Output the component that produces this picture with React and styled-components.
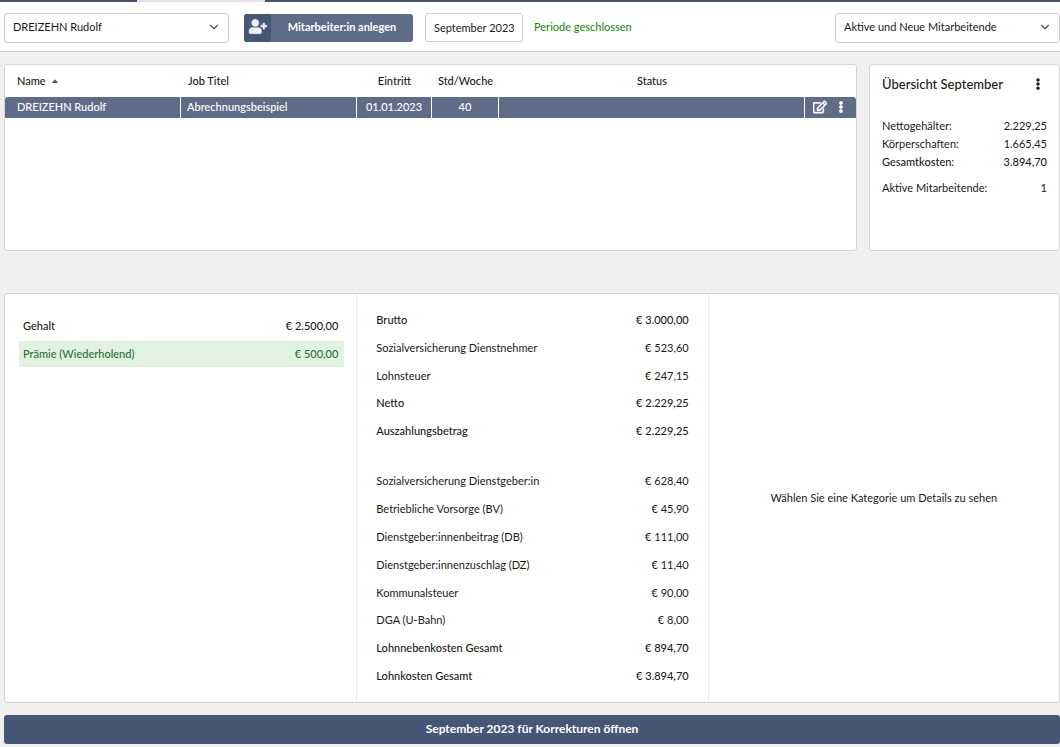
import React, { useState } from 'react'
import styled, { createGlobalStyle } from 'styled-components'
import { FaUserPlus, FaRegEdit, FaEllipsisV, FaCaretUp } from 'react-icons/fa'
import { LuChevronDown } from 'react-icons/lu'

const GlobalStyle = createGlobalStyle`
    * {
        box-sizing: border-box;
    }
    body {
        margin: 0;
        background: #f1f0ef;
        color: #1a1a1a;
        font-family: Lato, "Open Sans", sans-serif;
        font-size: 11px;
        line-height: 18px;
    }
    button, input, select {
        font: inherit;
        color: inherit;
    }
    h2, ul, p {
        margin: 0;
        padding: 0;
    }
`

const TabStrip = styled.nav`
    display: flex;
    height: 2px;
    background: #46536f;
`
const ActiveTab = styled.span`
    width: 128px;
    margin-left: 137px;
    background: #e4e4e8;
`
const Toolbar = styled.header`
    display: flex;
    align-items: center;
    height: 50px;
    padding: 2px 0 0 4px;
    background: #fff;
    border-bottom: 1px solid #cfcfcf;
`
const SelectBox = styled.div`
    position: relative;
    width: 225px;
    margin-left: ${props => props.$right ? 'auto' : '0'};
    svg {
        position: absolute;
        right: 8px;
        top: 7px;
        width: 14px;
        height: 14px;
        color: #46536f;
        pointer-events: none;
    }
`
const Select = styled.select`
    appearance: none;
    display: block;
    width: 100%;
    height: 30px;
    padding: 0 28px 2px 8px;
    background: #fff;
    border: 1px solid #cfcfcf;
    border-radius: 3px;
`
const AddButton = styled.button`
    display: flex;
    align-items: center;
    height: 28px;
    margin: 0 12px 0 15px;
    padding: 0;
    overflow: hidden;
    background: #5f6c88;
    border: none;
    border-radius: 3px;
    color: #fff;
    font-weight: 700;
`
const AddIcon = styled.span`
    display: flex;
    align-items: center;
    justify-content: center;
    width: 27px;
    height: 28px;
    padding-bottom: 2px;
    background: #465776;
    color: #eef1f7;
    svg {
        width: 18px;
        height: 15px;
        stroke: currentColor;
        stroke-width: 16px;
        overflow: visible;
    }
`
const AddLabel = styled.span`
    width: 142px;
    padding-bottom: 2px;
    text-align: center;
`
const PeriodInput = styled.input`
    width: 98px;
    height: 29px;
    padding: 0 8px;
    background: #fff;
    border: 1px solid #cfcfcf;
    border-radius: 3px;
`
const PeriodState = styled.span`
    margin-left: 11px;
    padding-bottom: 2px;
    color: #12850f;
`

const Page = styled.main`
    display: flex;
    flex-direction: column;
    padding: 12px 0 3px 4px;
`
const TopRow = styled.div`
    display: grid;
    grid-template-columns: 1fr 191px;
    gap: 12px;
    min-height: 187px;
    margin-bottom: 42px;
`
const Card = styled.section`
    background: #fff;
    border: 1px solid #d4d4d4;
    border-radius: 3px;
`

const StaffTable = styled.table`
    width: 100%;
    table-layout: fixed;
    border-collapse: separate;
    border-spacing: 0;
`
const HeadCell = styled.th`
    width: ${props => props.$width};
    height: 32px;
    padding: 0;
    padding-left: ${props => props.$left};
    font-weight: 500;
    text-align: ${props => props.$center ? 'center' : 'left'};
    svg {
        width: 10px;
        height: 10px;
        margin-left: 2px;
        vertical-align: -1px;
        color: #555;
    }
`
const Cell = styled.td`
    height: 21px;
    padding: 0 0 1px;
    padding-left: ${props => props.$left};
    background: #5f6c88;
    border-right: 1px solid #fff;
    color: #fff;
    font-weight: 500;
    text-align: ${props => props.$center ? 'center' : 'left'};
    &:first-child {
        border-top-left-radius: 3px;
    }
    &:last-child {
        border-right: none;
        border-top-right-radius: 3px;
    }
`
const RowActions = styled.div`
    display: flex;
    align-items: center;
    gap: 8px;
    padding-left: 8px;
    svg {
        stroke: currentColor;
        stroke-width: 20px;
    }
`
const IconButton = styled.button`
    display: flex;
    padding: 0;
    background: none;
    border: none;
    svg {
        width: ${props => props.$size};
        height: ${props => props.$size};
    }
`

const Overview = styled(Card)`
    padding: 9px 12px;
`
const OverviewHead = styled.div`
    display: flex;
    align-items: center;
    justify-content: space-between;
    margin-bottom: 23px;
    padding-right: 3px;
`
const OverviewTitle = styled.h2`
    font-size: 13px;
    font-weight: 500;
    line-height: 20px;
`
const OverviewLine = styled.p`
    display: flex;
    justify-content: space-between;
    margin-top: ${props => props.$gap ? '8px' : '0'};
    font-weight: ${props => props.$strong ? 500 : 400};
`

const Details = styled(Card)`
    display: grid;
    grid-template-columns: repeat(3, 1fr);
    min-height: 410px;
    margin-bottom: 12px;
`
const Column = styled.div`
    display: flex;
    flex-direction: column;
    gap: 22px;
    padding: ${props => props.$padding};
    & + & {
        border-left: 1px solid #ececec;
    }
`
const Amounts = styled.ul`
    display: grid;
    grid-auto-rows: 1fr;
    flex: ${props => props.$rows};
    list-style: none;
`
const Amount = styled.li`
    display: flex;
    align-items: center;
    justify-content: space-between;
    font-weight: ${props => props.$strong ? 500 : 400};
`
const Wages = styled.ul`
    display: grid;
    gap: 2px;
    list-style: none;
`
const Wage = styled.li`
    display: flex;
    align-items: center;
    justify-content: space-between;
    height: 26px;
    padding: 0 6px 0 4px;
    background: ${props => props.$active ? '#e0f2e0' : 'transparent'};
    color: ${props => props.$active ? '#2f6f35' : 'inherit'};
    font-weight: 500;
`
const Hint = styled.p`
    margin: auto;
`
const ReopenButton = styled.button`
    height: 29px;
    padding: 0 0 1px;
    background: #465776;
    border: none;
    border-radius: 3px;
    color: #fff;
    font-size: 12px;
    font-weight: 700;
`

const wages = [
    { label: 'Gehalt', value: '2.500,00' },
    { label: 'Prämie (Wiederholend)', value: '500,00', active: true },
]

const netto = [
    { label: 'Brutto', value: '3.000,00', strong: true },
    { label: 'Sozialversicherung Dienstnehmer', value: '523,60' },
    { label: 'Lohnsteuer', value: '247,15' },
    { label: 'Netto', value: '2.229,25', strong: true },
    { label: 'Auszahlungsbetrag', value: '2.229,25', strong: true },
]

const costs = [
    { label: 'Sozialversicherung Dienstgeber:in', value: '628,40' },
    { label: 'Betriebliche Vorsorge (BV)', value: '45,90' },
    { label: 'Dienstgeber:innenbeitrag (DB)', value: '111,00' },
    { label: 'Dienstgeber:innenzuschlag (DZ)', value: '11,40' },
    { label: 'Kommunalsteuer', value: '90,00' },
    { label: 'DGA (U-Bahn)', value: '8,00' },
    { label: 'Lohnnebenkosten Gesamt', value: '894,70', strong: true },
    { label: 'Lohnkosten Gesamt', value: '3.894,70', strong: true },
]

function AmountList ({ items }) {
    return (
        <Amounts $rows={items.length}>
            {items.map(item => (
                <Amount key={item.label} $strong={item.strong}>
                    <span>{item.label}</span>
                    <span>€ {item.value}</span>
                </Amount>
            ))}
        </Amounts>
    )
}

export default function App () {

    const [period, setPeriod] = useState('September 2023')

    return (
        <>
            <GlobalStyle />
            <TabStrip><ActiveTab /></TabStrip>
            <Toolbar>
                <SelectBox>
                    <Select aria-label="Mitarbeiter:in">
                        <option>DREIZEHN Rudolf</option>
                    </Select>
                    <LuChevronDown />
                </SelectBox>
                <AddButton>
                    <AddIcon><FaUserPlus /></AddIcon>
                    <AddLabel>Mitarbeiter:in anlegen</AddLabel>
                </AddButton>
                <PeriodInput aria-label="Periode" value={period} onChange={e => setPeriod(e.target.value)} />
                <PeriodState>Periode geschlossen</PeriodState>
                <SelectBox $right>
                    <Select aria-label="Filter">
                        <option>Aktive und Neue Mitarbeitende</option>
                    </Select>
                    <LuChevronDown />
                </SelectBox>
            </Toolbar>

            <Page>
                <TopRow>
                    <Card>
                        <StaffTable>
                            <thead>
                                <tr>
                                    <HeadCell $width="176px" $left="12px">Name <FaCaretUp /></HeadCell>
                                    <HeadCell $width="176px" $left="7px">Job Titel</HeadCell>
                                    <HeadCell $width="75px" $center>Eintritt</HeadCell>
                                    <HeadCell $width="67px" $center>Std/Woche</HeadCell>
                                    <HeadCell $center>Status</HeadCell>
                                    <HeadCell $width="51px" aria-label="Aktionen" />
                                </tr>
                            </thead>
                            <tbody>
                                <tr>
                                    <Cell $left="12px">DREIZEHN Rudolf</Cell>
                                    <Cell $left="6px">Abrechnungsbeispiel</Cell>
                                    <Cell $center>01.01.2023</Cell>
                                    <Cell $center>40</Cell>
                                    <Cell />
                                    <Cell>
                                        <RowActions>
                                            <IconButton $size="14px" aria-label="Bearbeiten"><FaRegEdit /></IconButton>
                                            <IconButton $size="12px" aria-label="Mehr"><FaEllipsisV /></IconButton>
                                        </RowActions>
                                    </Cell>
                                </tr>
                            </tbody>
                        </StaffTable>
                    </Card>
                    <Overview>
                        <OverviewHead>
                            <OverviewTitle>Übersicht September</OverviewTitle>
                            <IconButton $size="12px" aria-label="Menü"><FaEllipsisV /></IconButton>
                        </OverviewHead>
                        <OverviewLine><span>Nettogehälter:</span><span>2.229,25</span></OverviewLine>
                        <OverviewLine><span>Körperschaften:</span><span>1.665,45</span></OverviewLine>
                        <OverviewLine $strong><span>Gesamtkosten:</span><span>3.894,70</span></OverviewLine>
                        <OverviewLine $gap><span>Aktive Mitarbeitende:</span><span>1</span></OverviewLine>
                    </Overview>
                </TopRow>

                <Details>
                    <Column $padding="19px 12px 12px 14px">
                        <Wages>
                            {wages.map(wage => (
                                <Wage key={wage.label} $active={wage.active}>
                                    <span>{wage.label}</span>
                                    <span>€ {wage.value}</span>
                                </Wage>
                            ))}
                        </Wages>
                    </Column>
                    <Column $padding="12px 19px">
                        <AmountList items={netto} />
                        <AmountList items={costs} />
                    </Column>
                    <Column $padding="12px">
                        <Hint>Wählen Sie eine Kategorie um Details zu sehen</Hint>
                    </Column>
                </Details>

                <ReopenButton>September 2023 für Korrekturen öffnen</ReopenButton>
            </Page>
        </>
    )
}
